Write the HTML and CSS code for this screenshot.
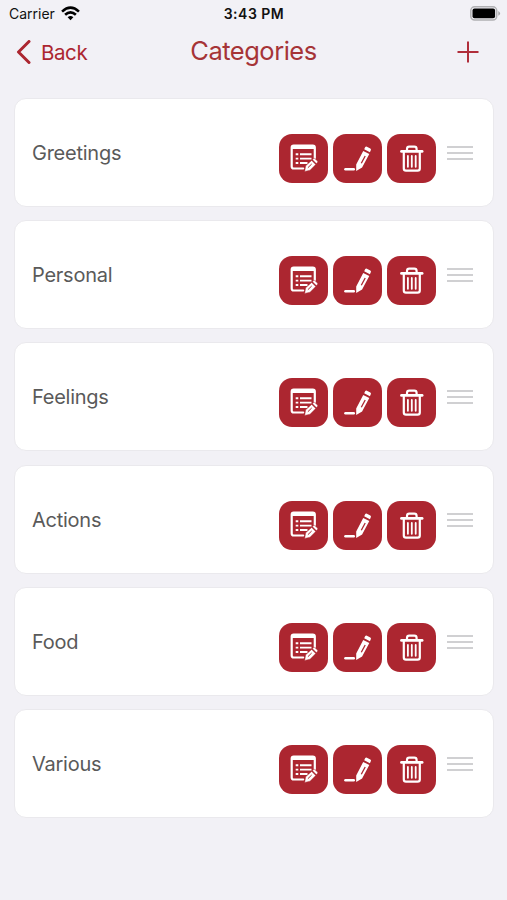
FILE: index.html
```html
<!DOCTYPE html>
<html lang="en">
<head>
    <meta charset="UTF-8">
    <title>Categories</title>
    <link rel="stylesheet" href="styles.css">
</head>
<body>
    <!-- Icons shared by every row -->
    <svg class="icon-defs" width="0" height="0">
        <symbol id="icon-list" viewBox="0 0 49 49">
            <path d="M35.800 24V13.500a2 2 0 0 0-2-2H14.700a2 2 0 0 0-2 2V32.500a2 2 0 0 0 2 2h9.500" fill="none" stroke="#fff" stroke-width="2.200" stroke-linecap="round"/>
            <path d="M12.500 15v-2q0-2 2-2H34q2 0 2 2v2z" fill="#fff"/>
            <path d="M16.700 20.200h2.600M21 20.200h11.500M16.700 24.600h2.600M21 24.600h11.500M16.700 29h2.600M21 29h7.500" fill="none" stroke="#fff" stroke-width="1.900"/>
            <path d="M25.700 37.400l1-5.600 6-5.400 4 4.200-5.700 5.600zM33.500 25.700l1.200-1.100q.7-.5 1.300.1l2.400 2.400q.6.700 0 1.300l-1.100 1.100z" fill="#fff" stroke="#ac2630" stroke-width=".4"/>
            <path d="M28.900 33.700l3.800-3.700" stroke="#ac2630" stroke-width="1"/>
        </symbol>
        <symbol id="icon-edit" viewBox="0 0 49 49">
            <path d="M12.400 35.300h8.400" stroke="#fff" stroke-width="2.400" stroke-linecap="round"/>
            <path d="M23.200 37v-6.600l7-13.500 6.100 3.100-7.200 13.600zM31.200 15.200l.9-1.900q.7-1.100 1.800-.6l3.400 1.800q1.100.7.500 1.800l-.9 1.900z" fill="#fff"/>
            <path d="M28.300 29.200l3.900-7.200" stroke="#ac2630" stroke-width="1.300"/>
        </symbol>
        <symbol id="icon-trash" viewBox="0 0 49 49">
            <g fill="none" stroke="#fff" stroke-width="2.200" stroke-linecap="round" stroke-linejoin="round">
                <path d="M14.500 17.400h20.600" stroke-width="2.800"/>
                <path d="M20 16v-1q0-2.300 2.300-2.300h5q2.300 0 2.300 2.300v1"/>
                <path d="M16.800 18.500v16q0 2.200 2.200 2.200h11.600q2.200 0 2.200-2.200v-16"/>
                <path d="M20.900 22v10.800M24.800 22v10.800M28.700 22v10.800" stroke-width="1.800"/>
            </g>
        </symbol>
    </svg>

    <div class="status-bar">
        <div class="carrier">
            <span>Carrier</span>
            <svg width="19" height="15" viewBox="0 0 18 14">
                <g fill="none" stroke="#000" stroke-width="2.500">
                    <path d="M1 5.200q8-7.400 16 0"/>
                    <path d="M3.900 8.200q5.100-4.700 10.200 0"/>
                </g>
                <path d="M6.300 10.500q2.700-2.400 5.400 0L9 13.300z"/>
            </svg>
        </div>
        <div class="time">3:43 PM</div>
        <svg class="battery" width="31" height="15" viewBox="0 0 31 15">
            <rect x=".8" y=".8" width="25.900" height="13.200" rx="3.800" fill="#f2f1f6" stroke="#b0b0b3" stroke-width="1.500"/>
            <rect x="2.500" y="2.500" width="22.600" height="9.800" rx="2"/>
            <path d="M28.300 5q3.600 2.400 0 4.800z" fill="#a5a5a8"/>
        </svg>
    </div>

    <div class="nav-bar">
        <a class="back">
            <svg width="15" height="24" viewBox="0 0 15 24">
                <path d="M13 1.500L2.500 12 13 22.500" fill="none" stroke="#ac2630" stroke-width="3" stroke-linecap="round" stroke-linejoin="round"/>
            </svg>
            <span>Back</span>
        </a>
        <h1>Categories</h1>
        <svg class="add" width="22" height="22" viewBox="0 0 22 22">
            <path d="M11 .5v21M.5 11h21" stroke="#b02e3a" stroke-width="2"/>
        </svg>
    </div>

    <div class="list" id="list"></div>

    <script>
        const categories = ["Greetings", "Personal", "Feelings", "Actions", "Food", "Various"];
        const icons = ["list", "edit", "trash"];

        document.getElementById("list").innerHTML = categories.map((name) => `
            <div class="card">
                <span class="name">${name}</span>
                <div class="actions">
                    ${icons.map((icon) => `<button class="action"><svg><use href="#icon-${icon}"/></svg></button>`).join("")}
                </div>
                <div class="handle"><i></i><i></i><i></i></div>
            </div>`).join("");
    </script>
</body>
</html>
```
FILE: styles.css
```css
* {
    box-sizing: border-box;
}

body {
    margin: 0;
    height: 900px;
    overflow: hidden;
    background-color: #f2f1f6;
    font-family: Inter, "Liberation Sans", sans-serif;
}

.icon-defs {
    display: none;
}

/* Status bar */
.status-bar {
    display: grid;
    grid-template-columns: 1fr auto 1fr;
    align-items: center;
    height: 27px;
    padding: 0 6px 0 7px;
    font-size: 14px;
    color: #111;
}

.carrier {
    display: flex;
    align-items: center;
    gap: 6px;
    padding-left: 2px;
}

.time {
    font-weight: 600;
    letter-spacing: 0.5px;
}

.battery {
    justify-self: end;
}

/* Navigation bar */
.nav-bar {
    display: grid;
    grid-template-columns: 1fr auto 1fr;
    align-items: center;
    height: 50px;
    padding: 0 28px;
    color: #ac2630;
}

.back {
    display: flex;
    align-items: center;
    gap: 10px;
    margin-left: -12px;
    font-size: 20.5px;
    letter-spacing: -0.4px;
}

.nav-bar h1 {
    margin: -3px 0 0;
    font-size: 25.5px;
    font-weight: 400;
    letter-spacing: -0.5px;
    color: #a63437;
}

.add {
    justify-self: end;
}

/* Category cards */
.list {
    display: flex;
    flex-direction: column;
    gap: 13.2px;
    padding: 21px 13px 0 14px;
}

.card {
    display: flex;
    align-items: center;
    height: 109px;
    padding: 0 20px 0 17px;
    background-color: #fff;
    border: 1px solid #eae9ed;
    border-radius: 12px;
}

.name {
    flex: 1;
    padding-top: 1px;
    font-size: 20px;
    letter-spacing: -0.25px;
    color: #5a5a5a;
}

.actions {
    display: flex;
    gap: 5px;
    margin: 12px 11px 0 0;
}

.action {
    width: 49px;
    height: 49px;
    padding: 0;
    border: none;
    border-radius: 13px;
    background-color: #ac2630;
}

.action svg {
    display: block;
    width: 49px;
    height: 49px;
}

/* Drag handle */
.handle {
    display: flex;
    flex-direction: column;
    gap: 4px;
    width: 26px;
    padding-top: 1px;
}

.handle i {
    height: 2px;
    background-color: #d0d0d2;
}
```
